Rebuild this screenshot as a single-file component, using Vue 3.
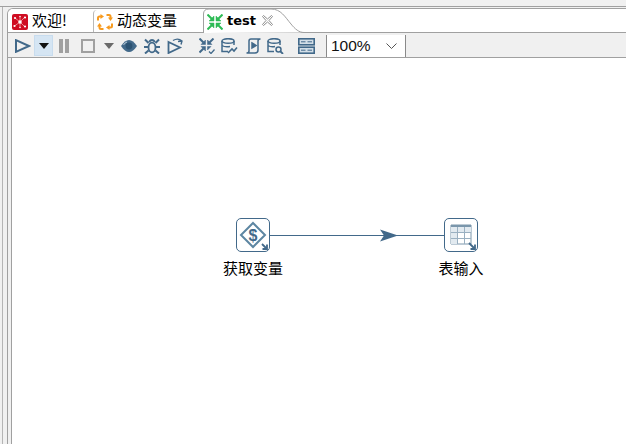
<script setup>
const cyan = '#42698a'
const rotations = [0, 90, 180, 270]
</script>

<template>
  <div class="page">
    <div class="gutter"><div class="gline"></div></div>
    <div class="main">
      <div class="tabbar">
        <div class="tab t1">
          <svg class="ticon" width="16" height="16" viewBox="0 0 16 16">
            <rect width="16" height="16" rx="2" fill="#cf0d22"/>
            <path d="M3 4 8 8M13 3 8 8M2.500 12 8 8M13 13 8 8M8 8 8 2.500M8 8 8 13.500" stroke="#f6a6a6" stroke-width="0.800" fill="none"/>
            <g fill="#fff"><circle cx="8" cy="8" r="1.800"/><circle cx="3" cy="4" r="1.100"/><circle cx="13" cy="3.500" r="1.100"/><circle cx="2.500" cy="12" r="1.100"/><circle cx="13" cy="12.500" r="1.100"/><circle cx="8" cy="2.500" r="0.800"/><circle cx="8" cy="13.500" r="0.800"/></g>
          </svg>
          <span>欢迎!</span>
        </div>
        <div class="tab t2">
          <svg class="ticon" width="16" height="16" viewBox="0 0 16 16">
            <g v-for="r in rotations" :key="r" :transform="`rotate(${r} 8 8)`">
              <path d="M3.500 0 7 2.500 3.500 5Z" fill="#f79a1e"/>
              <path d="M4.500 2.500H2.500Q1 2.500 1 4V6.500" stroke="#f79a1e" stroke-width="2" fill="none"/>
            </g>
          </svg>
          <span>动态变量</span>
        </div>
        <div class="tab t3">
          <svg class="tabshape" width="102" height="24" viewBox="0 0 102 24">
            <path d="M0.500 24V5Q0.500 0 6 0H68C78 0 82 8 88 15C92 20 96 23.500 101 23.500" fill="#fff" stroke="#a0a0a0"/>
          </svg>
          <svg class="ticon" width="16" height="16" viewBox="0 0 16 16" fill="#2dbb55" stroke="#2dbb55">
            <path d="M7 7H2L7 2Z" stroke-width="0.500"/><path d="M0.500 0.500 5 5" stroke-width="2"/>
            <path d="M9 7H14L9 2Z" stroke-width="0.500"/><path d="M15.500 0.500 11 5" stroke-width="2"/>
            <path d="M7 9H2L7 14Z" stroke-width="0.500"/><path d="M0.500 15.500 5 11" stroke-width="2"/>
            <path d="M9 9H14L9 14Z" stroke-width="0.500"/><path d="M15.500 15.500 11 11" stroke-width="2"/>
          </svg>
          <b>test</b>
          <svg class="close" width="11" height="11" viewBox="0 0 11 11" fill="#fff" stroke="#8c8c8c">
            <path d="M1.500 0.500 5.500 4 9.500 0.500 10.500 1.500 7 5.500 10.500 9.500 9.500 10.500 5.500 7 1.500 10.500 0.500 9.500 4 5.500 0.500 1.500Z"/>
          </svg>
        </div>
      </div>
      <div class="toolbar">
        <svg class="ic run" width="16" height="14" viewBox="0 0 16 14" fill="none" :stroke="cyan" stroke-width="2"><path d="M1 1.200 14 7 1 12.800Z"/></svg>
        <div class="drop active"><i></i></div>
        <svg class="ic pause" width="10" height="14" viewBox="0 0 10 14" fill="#a0a0a0"><rect width="4" height="14"/><rect x="6" width="4" height="14"/></svg>
        <svg class="ic stop" width="14" height="14" viewBox="0 0 14 14" fill="none" stroke="#a0a0a0" stroke-width="2"><rect x="1" y="1" width="12" height="12"/></svg>
        <div class="drop2"><i></i></div>
        <svg class="ic eye" width="16" height="12" viewBox="0 0 16 12"><path d="M0 6Q8 -6 16 6Q8 18 0 6Z" :fill="cyan"/><circle cx="8" cy="6" r="3.400" fill="#2c5373"/><path d="M2.500 5Q4 2.500 6 2" stroke="#b9cbd8" fill="none"/></svg>
        <svg class="ic bug" width="16" height="16" viewBox="0 0 16 16" fill="none" :stroke="cyan" stroke-width="2"><ellipse cx="8" cy="9.500" rx="3.500" ry="4.800" stroke-width="1.800"/><path d="M5 4Q8 0 11 4" stroke-width="2"/><path d="M1 1.500 4.500 5M15 1.500 11.500 5M0 9H4M16 9H12M1 15.500 4.500 12.500M15 15.500 11.500 12.500"/></svg>
        <svg class="ic replay" width="17" height="16" viewBox="0 0 17 16" fill="none" :stroke="cyan" stroke-width="1.800"><path d="M1.500 4 13 9.500 1.500 15Z"/><path d="M6 2.500Q11 -0.500 15 3L14 6.500M15 3 11 3.500" stroke-width="1.400"/></svg>
        <svg class="ic check" width="16" height="16" viewBox="0 0 16 16" fill="#42698a" :stroke="cyan">
          <path d="M6.500 6.500H2L6.500 2Z" stroke-width="0.500"/><path d="M0.500 0.500 4.500 4.500" stroke-width="2"/>
          <path d="M8.500 6.500H13L8.500 2Z" stroke-width="0.500"/><path d="M14.500 0.500 10.500 4.500" stroke-width="2"/>
          <path d="M6.500 8.500H2L6.500 13Z" stroke-width="0.500"/><path d="M0.500 14.500 4.500 10.500" stroke-width="2"/>
          <path d="M8.500 8.500H12L8.500 12Z" stroke-width="0.500"/>
          <path d="M10 13.500 12 15.500 15.500 11.500" stroke-width="1.300" fill="none"/>
        </svg>
        <svg class="ic db1" width="17" height="16" viewBox="0 0 17 16" fill="none" :stroke="cyan" stroke-width="1.500"><ellipse cx="7" cy="3" rx="6" ry="2.300"/><path d="M1 3V13.500H7M13 3V7M1 7.500Q4 9.500 9 8.500"/><path d="M7 15 11 11 13 13 16 9.500" stroke-width="1.600"/></svg>
        <svg class="ic scr" width="16" height="16" viewBox="0 0 16 16" fill="none" :stroke="cyan" stroke-width="1.500"><path d="M4 13V3Q4 1 6 1H15.500Q13 1 13 3V12Q13 15 10 15H1.500Q4 15 4 13"/><path d="M7 5 11 7.500 7 10Z" :fill="cyan"/></svg>
        <svg class="ic db2" width="17" height="16" viewBox="0 0 17 16" fill="none" :stroke="cyan" stroke-width="1.500"><ellipse cx="7" cy="3" rx="6" ry="2.300"/><path d="M1 3V13.500H7M13 3V7M1 7.500Q4 9.500 8 8.500"/><circle cx="11.500" cy="11.500" r="2.500"/><path d="M13.500 13.500 16 16" stroke-width="1.800"/></svg>
        <svg class="ic grid" width="17" height="16" viewBox="0 0 17 16"><g fill="#d3dee7" :stroke="cyan" stroke-width="1.600"><rect x="0.800" y="0.800" width="15.400" height="6"/><rect x="0.800" y="9.200" width="15.400" height="6"/></g><path d="M3 3.800H7.500M9.500 3.800H14M3 12.200H7.500M9.500 12.200H14" :stroke="cyan"/></svg>
        <div class="zoomsel">
          <span>100%</span>
          <svg width="11" height="7" viewBox="0 0 11 7" fill="none" stroke="#555"><path d="M0.500 0.500 5.500 5.500 10.500 0.500"/></svg>
        </div>
      </div>
      <div class="canvas">
        <svg class="hop" width="626" height="386"><path d="M270 177.500H444" stroke="#42698a"/><path d="M380 171.500 398 177.500 380 183.500 384 177.500Z" fill="#42698a"/></svg>
        <div class="node n1">
          <div class="box">
            <svg width="32" height="32" viewBox="0 0 32 32" fill="none">
              <path d="M16 4 28 16 16 28 4 16Z" stroke="#5d86a2" stroke-width="2"/>
              <text x="16" y="21.500" text-anchor="middle" class="dollar">$</text>
              <path d="M25 25 30 30M30 25.500V30H25.500" stroke="#42698a" stroke-width="1.800"/>
            </svg>
          </div>
          <span>获取变量</span>
        </div>
        <div class="node n2">
          <div class="box">
            <svg width="32" height="32" viewBox="0 0 32 32" fill="none">
              <path d="M6 6H26V25H6Z" fill="#fff" stroke="#7a96ab"/>
              <path d="M6 6H26V8H6Z" fill="#7a96ab"/>
              <path d="M6 8H26V13H6ZM6 13H12V25H6Z" fill="#e2eaf0"/>
              <path d="M6 13.500H26M6 19.500H26M12.500 8V25M19.500 8V25" stroke="#9ab0c1"/>
              <path d="M24 24 30 30M30 25.500V30H25.500" stroke="#42698a" stroke-width="1.800"/>
            </svg>
          </div>
          <span>表输入</span>
        </div>
      </div>
    </div>
  </div>
</template>

<style>
html, body { margin: 0; background: #f0f0f0; }
</style>

<style scoped>
.page { width: 626px; height: 444px; display: flex; overflow: hidden; background: #f0f0f0; font-family: "Noto Sans CJK SC", "Liberation Sans", sans-serif; position: relative; }
.page::before { content: ""; position: absolute; left: 0; right: 0; top: 6px; height: 1px; background: #a0a0a0; }
.gutter { width: 7px; flex: none; margin-top: 7px; display: flex; padding-left: 2px; box-sizing: border-box; }
.gline { width: 1px; background: #b4b4b4; }
.main { flex: 1; border-left: 1px solid #a0a0a0; border-top: 1px solid #a0a0a0; border-top-left-radius: 6px; margin-top: 8px; display: flex; flex-direction: column; min-width: 0; background: #f0f0f0; }
.tabbar { height: 24px; flex: none; box-sizing: border-box; background: #fff; border-top-left-radius: 5px; border-bottom: 1px solid #a0a0a0; display: flex; position: relative; font-size: 15px; color: #000; }
.tab { height: 23px; display: flex; align-items: center; position: relative; box-sizing: border-box; }
.tab span { margin-bottom: 1px; line-height: 22px; }
.t1 { width: 85px; padding-left: 4px; gap: 4px; }
.t2 { width: 110px; padding-left: 4px; gap: 4px; }
.t2::before { content: ""; position: absolute; left: 0; top: 1px; bottom: 0; width: 4px; border-left: 1px solid #b8b8b8; border-top-left-radius: 4px; }
.t3 { width: 102px; padding-left: 4px; gap: 4px; }
.tabshape { position: absolute; left: 0; top: 0; }
.t3 .ticon, .t3 b, .t3 .close { position: relative; }
.t3 b { font-family: "DejaVu Sans", sans-serif; font-size: 13px; font-weight: 700; margin-bottom: 1px; }
.close { margin-left: 2px; }
.ticon { flex: none; margin-top: 2px; }
.toolbar { height: 25px; flex: none; display: flex; align-items: center; border-bottom: 1px solid #a0a0a0; padding: 1px 0 0 7px; box-sizing: border-box; }
.ic { flex: none; }
.drop { width: 19px; height: 21px; display: flex; align-items: center; justify-content: center; margin-left: 3px; }
.active { background: #d5e5f3; box-shadow: inset 0 0 0 1px #c8dcee; }
.drop i, .drop2 i { display: block; width: 0; height: 0; border-left: 5px solid transparent; border-right: 5px solid transparent; border-top: 6px solid #111; }
.drop2 i { border-top-color: #6a6a6a; }
.pause { margin-left: 6px; }
.stop { margin-left: 12px; }
.drop2 { margin-left: 9px; }
.eye { margin-left: 7px; }
.bug { margin-left: 7px; }
.replay { margin-left: 7px; }
.check { margin-left: 15px; }
.db1 { margin-left: 6px; }
.scr { margin-left: 7px; }
.db2 { margin-left: 6px; }
.grid { margin-left: 14px; }
.zoomsel { width: 80px; height: 22px; margin-left: 11px; align-self: flex-end; background: #fff; border-left: 1px solid #8a8a8a; border-right: 1px solid #8a8a8a; box-sizing: border-box; display: flex; align-items: center; justify-content: space-between; padding: 0 8px 0 4px; font: 15.500px "Liberation Sans", sans-serif; color: #111; }
.canvas { flex: 1; background: #fff; position: relative; margin-left: 3px; border-left: 1px solid #a0a0a0; }
.hop { position: absolute; left: -12px; top: 0; }
.node { position: absolute; display: flex; flex-direction: column; align-items: center; width: 80px; font-size: 15px; line-height: 22px; color: #000; }
.n1 { left: 201px; top: 160px; }
.n2 { left: 409px; top: 160px; }
.box { width: 32px; height: 32px; background: #fff; border: 1px solid #42698a; border-radius: 5px; margin-bottom: 5px; }
.box svg { display: block; }
.dollar { font: 700 16px "Liberation Sans", sans-serif; fill: #42698a; }
</style>
